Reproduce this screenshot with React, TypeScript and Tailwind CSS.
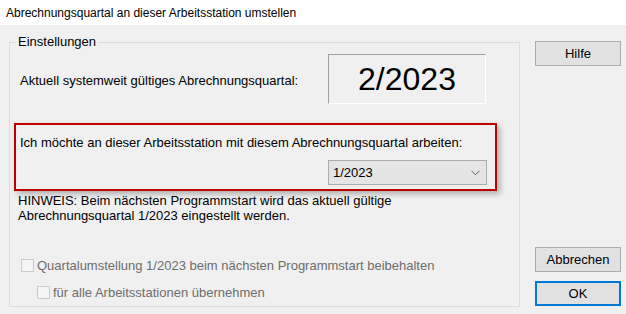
import React from "react";

export default function App() {
  return (
    <div
      className="w-[626px] h-[314px] bg-[#f0f0f0] text-black text-[13px] leading-[16px] overflow-hidden"
      style={{ fontFamily: '"Liberation Sans", Arial, sans-serif' }}
    >
      <div className="h-[25px] bg-white flex items-center pl-[6px] text-[12px]">
        Abrechnungsquartal an dieser Arbeitsstation umstellen
      </div>
      <div className="flex">
        <div className="relative ml-[9px] mt-[17px] w-[511px] h-[265px] border border-[#dcdcdc]">
          <span className="absolute left-[6px] top-[-9px] px-[2px] bg-[#f0f0f0]">Einstellungen</span>

          <div className="flex items-center ml-[10px] mt-[11px]">
            <div className="w-[308px] pt-[4px]">Aktuell systemweit gültiges Abrechnungsquartal:</div>
            <div className="w-[158px] h-[50px] border border-t-[#a0a0a0] border-l-[#a0a0a0] border-b-white border-r-white flex items-center justify-center text-[32px] leading-[36px]">
              2/2023
            </div>
          </div>

          <div className="ml-[4px] mt-[19px] w-[483px] h-[68px] border-2 border-[#c00000] shadow-[3px_3px_6px_rgba(0,0,0,0.28)] pl-[4px] pt-[10px]">
            <div>Ich möchte an dieser Arbeitsstation mit diesem Abrechnungsquartal arbeiten:</div>
            <div className="ml-[308px] mt-[9px] w-[159px] h-[25px] bg-[#e5e5e5] border border-[#acacac] flex items-center justify-between pl-[4px] pr-[6px]">
              <span>1/2023</span>
              <svg width="9" height="6" viewBox="0 0 9 6">
                <path d="M0.5 0.8 L4.5 4.8 L8.5 0.8" fill="none" stroke="#606060" strokeWidth="1" />
              </svg>
            </div>
          </div>

          <div className="ml-[8px] mt-[2px] leading-[15px]">
            HINWEIS: Beim nächsten Programmstart wird das aktuell gültige
            <br />
            Abrechnungsquartal 1/2023 eingestellt werden.
          </div>

          <div className="ml-[11px] mt-[35px] flex items-center h-[15px] text-[#6d6d6d]">
            <span className="w-[13px] h-[13px] border border-[#cccccc] bg-[#f5f5f5]" />
            <span className="ml-[3px]">Quartalumstellung 1/2023 beim nächsten Programmstart beibehalten</span>
          </div>
          <div className="ml-[27px] mt-[12px] flex items-center h-[15px] text-[#6d6d6d]">
            <span className="w-[13px] h-[13px] border border-[#cccccc] bg-[#f5f5f5]" />
            <span className="ml-[3px]">für alle Arbeitsstationen übernehmen</span>
          </div>
        </div>

        <div className="ml-[15px] mt-[16px] flex flex-col w-[86px]">
          <button className="h-[25px] bg-[#e1e1e1] border border-[#adadad] flex items-center justify-center">
            Hilfe
          </button>
          <button className="mt-[181px] h-[25px] bg-[#e1e1e1] border border-[#adadad] flex items-center justify-center">
            Abbrechen
          </button>
          <button className="mt-[9px] h-[25px] bg-[#e1e1e1] border-2 border-[#0078d7] flex items-center justify-center">
            OK
          </button>
        </div>
      </div>
    </div>
  );
}
